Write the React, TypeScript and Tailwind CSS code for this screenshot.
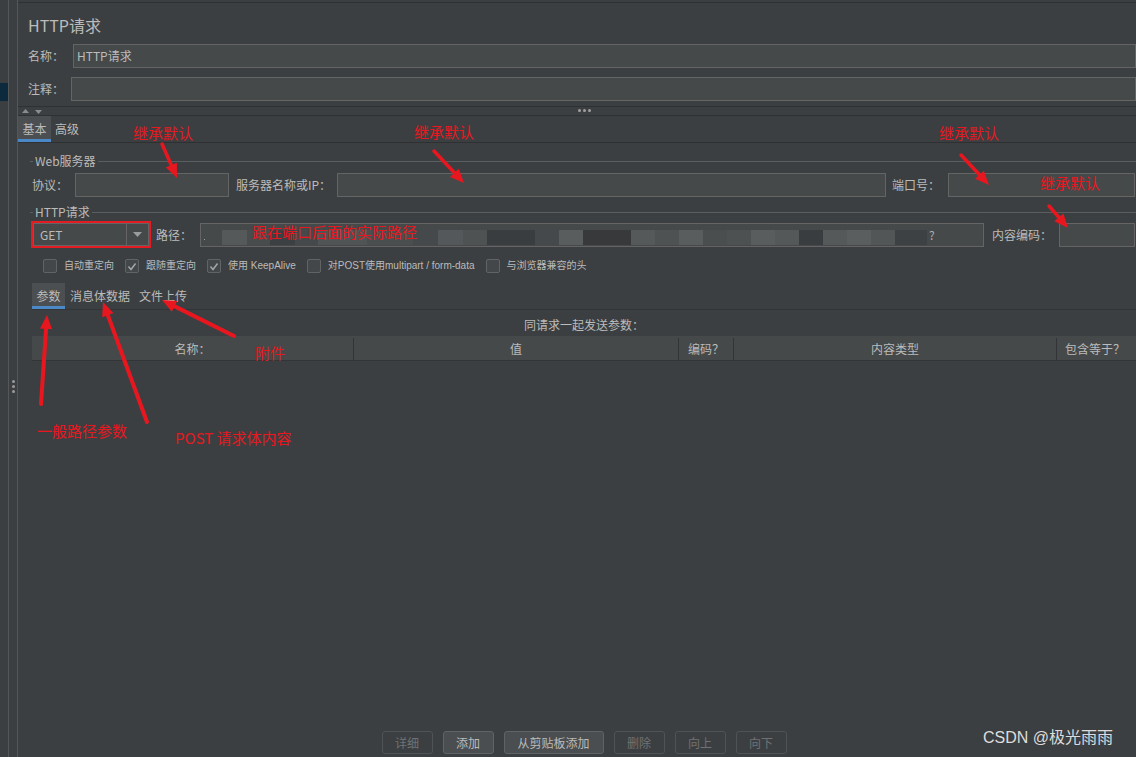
import React from "react";

const RED = "#e8171f";

type Arrow = [number, number, number, number, number];
const arrows: Arrow[] = [
  [162, 144, 177, 178, 3.5],
  [434, 151, 464, 183, 3.5],
  [961, 155, 989, 185, 3.5],
  [1049, 206, 1068, 228, 3.5],
  [41, 404, 47, 315, 4],
  [147, 422, 103, 302, 4],
  [234, 336, 162, 300, 4],
];

function ArrowShape({ a }: { a: Arrow }) {
  const [x1, y1, x2, y2, w] = a;
  const dx = x2 - x1;
  const dy = y2 - y1;
  const len = Math.hypot(dx, dy);
  const ux = dx / len;
  const uy = dy / len;
  const hl = 14;
  const hw = 6;
  const bx = x2 - ux * hl;
  const by = y2 - uy * hl;
  const px = -uy;
  const py = ux;
  const pts = `${x2},${y2} ${bx + px * hw},${by + py * hw} ${bx - px * hw},${by - py * hw}`;
  return (
    <g>
      <line x1={x1} y1={y1} x2={bx + ux * 2} y2={by + uy * 2} stroke={RED} strokeWidth={w} strokeLinecap="round" />
      <polygon points={pts} fill={RED} />
    </g>
  );
}

const mosaic: [number, string][] = [
  [25, "#56595a"], [23, "#484c4d"], [25, "#3d4042"], [23, "#46494b"], [49, "#505455"],
  [46, "#4a4e4f"], [25, "#46494b"], [25, "#54585a"], [24, "#4e5253"], [48, "#3a3d3f"],
  [24, "#46494b"], [24, "#595d5e"], [48, "#37393b"], [24, "#55595a"], [24, "#4e5253"],
  [24, "#595d5e"], [24, "#4a4e4f"], [24, "#4d5152"], [24, "#595d5e"], [24, "#545859"],
  [24, "#3a3d3f"], [24, "#56595a"], [24, "#5a5e5f"], [24, "#525657"], [32, "#3e4143"],
];

function Input({ className = "" }: { className?: string }) {
  return <div className={"h-[24px] bg-[#45494a] border border-[#646464] " + className} />;
}

function Check({ checked, label }: { checked: boolean; label: string }) {
  return (
    <div className="flex items-center">
      <div className="w-[14px] h-[14px] rounded-[2px] border border-[#616466] bg-[#43474a] flex items-center justify-center">
        {checked && (
          <svg width="10" height="9" viewBox="0 0 10 9">
            <polyline points="1.5,4.5 4,7.5 8.5,1.5" fill="none" stroke="#a8a8a8" strokeWidth="1.4" />
          </svg>
        )}
      </div>
      <span className="ml-[7px] text-[10px] leading-[14px] whitespace-nowrap font-['Liberation_Sans','Noto_Sans_CJK_SC',sans-serif]">
        {label}
      </span>
    </div>
  );
}

function GroupTitle({ title }: { title: string }) {
  return (
    <div className="h-[16px] flex items-center pl-[12px]">
      <div className="w-[3px] h-px bg-[#5b5e60]" />
      <span className="mx-[2px] leading-[16px]">{title}</span>
      <div className="flex-1 h-px bg-[#5b5e60]" />
    </div>
  );
}

function Btn({ label, w, enabled }: { label: string; w: string; enabled?: boolean }) {
  return (
    <div
      className={
        "h-[23px] rounded-[3px] border flex items-center justify-center text-[12px] " +
        w +
        (enabled ? " bg-[#4a4e50] border-[#5f6365] text-[#bbbbbb]" : " border-[#505355] text-[#6f7274]")
      }
    >
      {label}
    </div>
  );
}

export default function App() {
  return (
    <div className="relative flex w-[1136px] h-[757px] overflow-hidden bg-[#3c3f41] text-[#bbbbbb] font-['Noto_Sans_CJK_SC','Noto_Sans',sans-serif] text-[12px]">
      {/* left strip */}
      <div className="flex shrink-0 h-full">
        <div className="w-[9px] h-full border-r border-[#555759] flex flex-col">
          <div className="h-[83px]" />
          <div className="h-[18px] bg-[#0d293e]" />
        </div>
        <div className="w-[9px] h-full border-r border-[#555759] flex flex-col items-center pt-[380px] gap-[2px]">
          <div className="w-[3px] h-[3px] rounded-full bg-[#9a9a9a]" />
          <div className="w-[3px] h-[3px] rounded-full bg-[#9a9a9a]" />
          <div className="w-[3px] h-[3px] rounded-full bg-[#9a9a9a]" />
        </div>
      </div>

      {/* main */}
      <div className="flex-1 min-w-0 flex flex-col">
        <div className="h-[3px] border-b border-[#2e3032] shrink-0" />
        <div className="mt-[12px] h-[20px] leading-[20px] text-[16px] pl-[10px] shrink-0">HTTP请求</div>

        <div className="mt-[9px] h-[24px] flex items-center shrink-0">
          <div className="w-[55px] pl-[10px]">名称：</div>
          <div className="flex-1 h-full bg-[#45494a] border border-[#646464] flex items-center pl-[3px]">HTTP请求</div>
        </div>
        <div className="mt-[9px] h-[24px] flex items-center shrink-0">
          <div className="w-[53px] pl-[10px]">注释：</div>
          <Input className="flex-1" />
        </div>

        <div className="h-[6px] border-b border-[#2e3032] shrink-0" />
        <div className="h-[9px] border-b border-[#2e3032] flex items-start pl-[4px] pr-[10px] shrink-0">
          <svg width="7" height="4" viewBox="0 0 7 4" className="mt-[2px]">
            <polygon points="0,4 3.5,0 7,4" fill="#8a8d8f" />
          </svg>
          <svg width="7" height="4" viewBox="0 0 7 4" className="mt-[3px] ml-[6px]">
            <polygon points="0,0 7,0 3.5,4" fill="#8a8d8f" />
          </svg>
          <div className="flex-1 flex justify-center gap-[2px] mt-[2px]">
            <div className="w-[3px] h-[3px] rounded-full bg-[#a0a0a0]" />
            <div className="w-[3px] h-[3px] rounded-full bg-[#a0a0a0]" />
            <div className="w-[3px] h-[3px] rounded-full bg-[#a0a0a0]" />
          </div>
        </div>

        {/* tabs */}
        <div className="h-[26px] flex shrink-0">
          <div className="w-[33px] bg-[#4b4f52] border-b-[3px] border-[#4a88c7] flex justify-center pt-[4px] leading-[18px]">基本</div>
          <div className="px-[4px] flex pt-[4px] leading-[18px]">高级</div>
        </div>
        <div className="h-px bg-[#2e3032] shrink-0" />

        <div className="mt-[10px] shrink-0">
          <GroupTitle title="Web服务器" />
        </div>
        <div className="mt-[4px] h-[24px] flex items-center pl-[14px] pr-[1px] shrink-0">
          <div className="w-[43px]">协议：</div>
          <Input className="w-[154px]" />
          <div className="ml-[7px] w-[101px] whitespace-nowrap">服务器名称或IP：</div>
          <Input className="flex-1" />
          <div className="ml-[6px] w-[56px]">端口号：</div>
          <Input className="w-[187px]" />
        </div>

        <div className="mt-[7px] shrink-0">
          <GroupTitle title="HTTP请求" />
        </div>
        <div className="mt-[1px] h-[27px] flex items-center pl-[13px] pr-[1px] shrink-0">
          <div className="w-[120px] h-[27px] border-2 border-[#e31b23]">
            <div className="h-full bg-[#45494a] border border-[#646464] flex items-center">
              <div className="flex-1 pl-[6px]">GET</div>
              <div className="w-[22px] h-full border-l border-[#646464] flex items-center justify-center">
                <svg width="9" height="5" viewBox="0 0 9 5">
                  <polygon points="0,0 9,0 4.5,5" fill="#9a9c9e" />
                </svg>
              </div>
            </div>
          </div>
          <div className="ml-[5px] w-[44px]">路径：</div>
          <div className="flex-1 h-[24px] bg-[#45494a] border border-[#646464] flex items-start overflow-hidden">
            <div className="w-[21px] h-full relative">
              <div className="absolute left-[3px] top-[15px] w-[1px] h-[1px] bg-[#9aa0a4]" />
            </div>
            <div className="flex mt-[6px] h-[15px]">
              {mosaic.map(([w, c], i) => (
                <div key={i} className="h-full" style={{ width: w, backgroundColor: c }} />
              ))}
            </div>
            <div className="ml-[2px] leading-[22px] text-[#a9b0b5]">?</div>
          </div>
          <div className="ml-[8px] w-[67px]">内容编码：</div>
          <Input className="w-[76px]" />
        </div>

        <div className="mt-[11px] h-[14px] flex items-center pl-[25px] gap-[11px] shrink-0">
          <Check checked={false} label="自动重定向" />
          <Check checked={true} label="跟随重定向" />
          <Check checked={true} label="使用 KeepAlive" />
          <Check checked={false} label="对POST使用multipart / form-data" />
          <Check checked={false} label="与浏览器兼容的头" />
        </div>

        {/* sub tabs */}
        <div className="mt-[10px] ml-[14px] h-[27px] border-b border-[#323537] flex shrink-0">
          <div className="w-[33px] bg-[#4b4f52] border-b-[3px] border-[#4a88c7] flex justify-center pt-[4px] leading-[18px]">参数</div>
          <div className="px-[5px] pt-[4px] leading-[18px]">消息体数据</div>
          <div className="px-[4px] pt-[4px] leading-[18px]">文件上传</div>
        </div>

        <div className="mt-[7px] ml-[14px] h-[16px] leading-[16px] text-center shrink-0">同请求一起发送参数：</div>

        <div className="mt-[3px] ml-[14px] h-[25px] bg-[#45494a] border-b border-[#323537] flex pt-[2px] shrink-0">
          <div className="w-[322px] border-r border-[#323537] flex items-center justify-center">名称：</div>
          <div className="w-[325px] border-r border-[#323537] flex items-center justify-center">值</div>
          <div className="w-[55px] border-r border-[#323537] flex items-center justify-center">编码？</div>
          <div className="w-[323px] border-r border-[#323537] flex items-center justify-center">内容类型</div>
          <div className="flex-1 flex items-center pl-[8px] whitespace-nowrap">包含等于？</div>
        </div>

        <div className="flex-1" />

        <div className="h-[23px] mb-[3px] flex justify-center gap-[10px] pl-[14px] shrink-0">
          <Btn label="详细" w="w-[51px]" />
          <Btn label="添加" w="w-[51px]" enabled />
          <Btn label="从剪贴板添加" w="w-[100px]" enabled />
          <Btn label="删除" w="w-[51px]" />
          <Btn label="向上" w="w-[51px]" />
          <Btn label="向下" w="w-[51px]" />
        </div>
      </div>

      {/* annotation layer */}
      <svg className="absolute inset-0 pointer-events-none" width="1136" height="757" viewBox="0 0 1136 757">
        {arrows.map((a, i) => (
          <ArrowShape key={i} a={a} />
        ))}
      </svg>
      <div className="absolute left-[133px] top-[123px] text-[15px] leading-[20px] text-[#e8171f] whitespace-nowrap">继承默认</div>
      <div className="absolute left-[414px] top-[122px] text-[15px] leading-[20px] text-[#e8171f] whitespace-nowrap">继承默认</div>
      <div className="absolute left-[939px] top-[123px] text-[15px] leading-[20px] text-[#e8171f] whitespace-nowrap">继承默认</div>
      <div className="absolute left-[1040px] top-[173px] text-[15px] leading-[20px] text-[#e8171f] whitespace-nowrap">继承默认</div>
      <div className="absolute left-[252px] top-[222px] text-[15px] leading-[20px] text-[#e8171f] whitespace-nowrap">跟在端口后面的实际路径</div>
      <div className="absolute left-[255px] top-[343px] text-[15px] leading-[20px] text-[#e8171f] whitespace-nowrap">附件</div>
      <div className="absolute left-[37px] top-[421px] text-[15px] leading-[20px] text-[#e8171f] whitespace-nowrap">一般路径参数</div>
      <div className="absolute left-[175px] top-[428px] text-[15px] leading-[20px] text-[#e8171f] whitespace-nowrap">POST 请求体内容</div>

      <div className="absolute left-[983px] top-[728px] text-[16px] leading-[20px] text-[#dcdcdc] whitespace-nowrap font-['Liberation_Sans','Noto_Sans_CJK_SC',sans-serif]">
        CSDN @极光雨雨
      </div>
    </div>
  );
}
